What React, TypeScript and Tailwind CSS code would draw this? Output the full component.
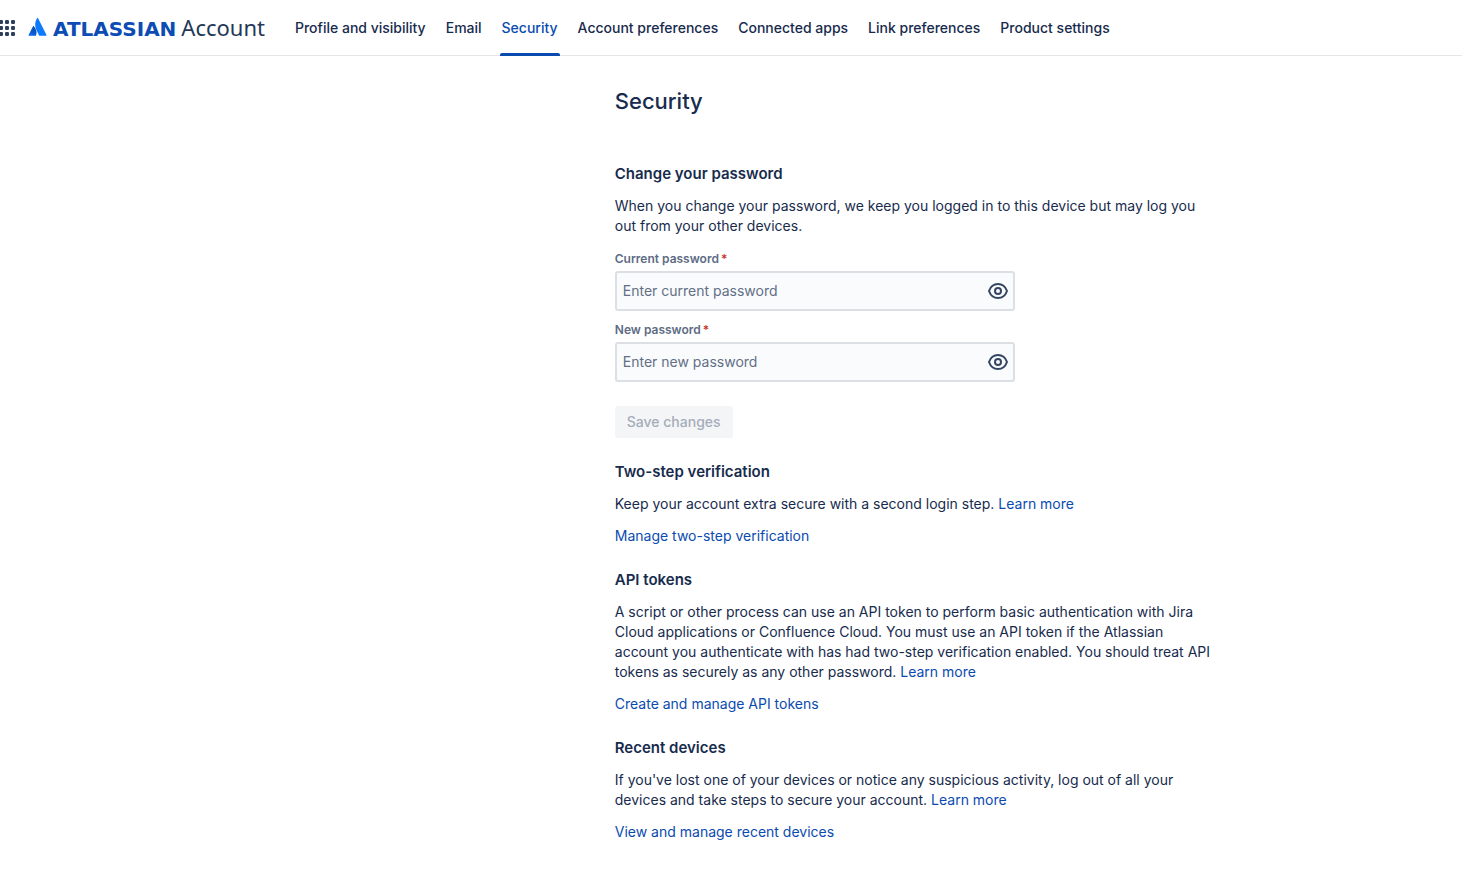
import { useState, type ReactNode } from "react";

const tabs = [
  "Profile and visibility",
  "Email",
  "Security",
  "Account preferences",
  "Connected apps",
  "Link preferences",
  "Product settings",
];

function AppSwitcherIcon() {
  const rows = [0, 6, 12];
  const columns = [-1, 5, 11];
  return (
    <svg width="16" height="16" viewBox="0 0 16 16" fill="#2c3e5d" aria-hidden="true">
      {rows.map((y) => columns.map((x) => <rect key={`${x}-${y}`} x={x} y={y} width="4" height="4" rx="1.2" />))}
    </svg>
  );
}

function AtlassianMark() {
  return (
    <svg width="19" height="19" viewBox="0 0 19 19" aria-hidden="true">
      <defs>
        <linearGradient id="mark" x1="8" y1="9" x2="3" y2="17" gradientUnits="userSpaceOnUse">
          <stop offset="0" stopColor="#0747a6" />
          <stop offset="1" stopColor="#0b66e8" />
        </linearGradient>
      </defs>
      <path d="M5.8 8.300c-.3-.3-.7-.3-.9.1L.6 16.900c-.2.4 0 .8.5.8h6.400c.2 0 .4-.1.500-.3C9.400 14.600 8.100 10.600 5.800 8.300z" fill="url(#mark)" />
      <path d="M9.100.2C6.700 4 6.700 8.200 8.200 11.500l2.900 5.900c.1.200.3.300.5.300h6.400c.5 0 .7-.4.500-.8L10.100.2c-.2-.4-.8-.4-1 0z" fill="#0b7aff" />
    </svg>
  );
}

function EyeIcon() {
  return (
    <svg width="24" height="24" viewBox="0 0 24 24" fill="none" stroke="#344563" strokeWidth="2" aria-hidden="true">
      <path d="M3 12C4.500 7.800 8 5 12 5s7.500 2.800 9 7c-1.500 4.200-5 7-9 7s-7.500-2.800-9-7z" strokeLinejoin="round" />
      <circle cx="12" cy="12" r="3" />
    </svg>
  );
}

function PasswordField({ id, label, placeholder }: { id: string; label: string; placeholder: string }) {
  const [visible, setVisible] = useState(false);
  return (
    <div className="flex flex-col gap-1">
      <label htmlFor={id} className="text-xs font-semibold text-[#5e6c84]">
        {label}
        <span className="pl-0.5 text-[#c9372c]">*</span>
      </label>
      <div className="flex h-10 items-center rounded-[3px] border-2 border-[#dcdfe4] bg-[#fafbfc] pr-[3px]">
        <input
          id={id}
          type={visible ? "text" : "password"}
          placeholder={placeholder}
          className="min-w-0 flex-1 bg-transparent px-1.5 text-sm text-[#172b4d] outline-none placeholder:text-[#626f86]"
        />
        <button type="button" aria-label={`Show ${label.toLowerCase()}`} onClick={() => setVisible(!visible)}>
          <EyeIcon />
        </button>
      </div>
    </div>
  );
}

function TextLink({ children }: { children: ReactNode }) {
  return (
    <a href="#" className="text-[#0a4bb0] hover:underline">
      {children}
    </a>
  );
}

function Section({ title, children }: { title: string; children: ReactNode }) {
  return (
    <section className="flex flex-col gap-3">
      <h2 className="text-[15px] leading-5 font-semibold">{title}</h2>
      {children}
    </section>
  );
}

export default function App() {
  return (
    <div className="min-h-screen bg-white font-['Inter',sans-serif] text-sm leading-5 text-[#172b4d]">
      <header className="flex h-14 items-stretch border-b border-[#e4e6ea]">
        <button type="button" aria-label="Switch to another app">
          <AppSwitcherIcon />
        </button>
        <a href="#" className="ml-3 flex items-center gap-1.5">
          <AtlassianMark />
          <span className="flex items-baseline gap-[5px] leading-7">
            <span className="font-['DejaVu_Sans',sans-serif] text-xl/7 font-bold text-[#0c4cb4]">ATLASSIAN</span>
            <span className="font-['Noto_Sans',sans-serif] text-[22px]/7 text-[#253858]">Account</span>
          </span>
        </a>
        <nav className="ml-7 flex gap-4 font-medium">
          {tabs.map((tab) => (
            <a
              key={tab}
              href="#"
              aria-current={tab === "Security" ? "page" : undefined}
              className={
                tab === "Security"
                  ? "relative flex items-center px-0.5 text-[#0a4bb0]"
                  : "flex items-center px-0.5"
              }
            >
              {tab}
              {tab === "Security" && (
                <span className="absolute inset-x-0 -bottom-px h-[3px] rounded-t-[2px] bg-[#0a4bb0]" />
              )}
            </a>
          ))}
        </nav>
      </header>

      <main className="ml-[42.05%] flex max-w-[602px] flex-col gap-6 pt-[31px] pb-10">
        <h1 className="mb-[25px] text-[22px] leading-7 font-medium">Security</h1>

        <Section title="Change your password">
          <p>
            When you change your password, we keep you logged in to this device but may log you out from your other
            devices.
          </p>
          <form className="flex max-w-[400px] flex-col items-start gap-6 pt-[3px]" onSubmit={(e) => e.preventDefault()}>
            <div className="flex w-full flex-col gap-[11px]">
              <PasswordField id="current-password" label="Current password" placeholder="Enter current password" />
              <PasswordField id="new-password" label="New password" placeholder="Enter new password" />
            </div>
            <button type="submit" disabled className="h-8 rounded-[3px] bg-[#f4f5f7] px-3 font-medium text-[#a5adba]">
              Save changes
            </button>
          </form>
        </Section>

        <Section title="Two-step verification">
          <p>
            Keep your account extra secure with a second login step. <TextLink>Learn more</TextLink>
          </p>
          <p>
            <TextLink>Manage two-step verification</TextLink>
          </p>
        </Section>

        <Section title="API tokens">
          <p>
            A script or other process can use an API token to perform basic authentication with Jira Cloud applications
            or Confluence Cloud. You must use an API token if the Atlassian account you authenticate with has had
            two-step verification enabled. You should treat API tokens as securely as any other password.{" "}
            <TextLink>Learn more</TextLink>
          </p>
          <p>
            <TextLink>Create and manage API tokens</TextLink>
          </p>
        </Section>

        <Section title="Recent devices">
          <p>
            If you've lost one of your devices or notice any suspicious activity, log out of all your devices and take
            steps to secure your account. <TextLink>Learn more</TextLink>
          </p>
          <p>
            <TextLink>View and manage recent devices</TextLink>
          </p>
        </Section>
      </main>
    </div>
  );
}
